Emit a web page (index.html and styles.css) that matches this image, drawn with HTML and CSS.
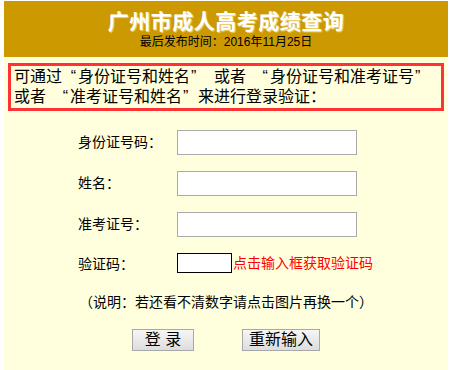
FILE: index.html
```html
<!DOCTYPE html>
<html lang="zh-CN">
<head>
<meta charset="utf-8">
<title>广州市成人高考成绩查询</title>
<link rel="stylesheet" href="styles.css">
</head>
<body>
<div class="page">
  <div class="head">
    <h1 class="title">广州市成人高考成绩查询</h1>
    <p class="date">最后发布时间：2016年11月25日</p>
  </div>
  <div class="main">
    <div class="notice">
      <div class="line">可通过<span class="q q-open">“</span>身份证号和姓名<span class="q q-close">”</span> 或者 <span class="q q-open">“</span>身份证号和准考证号<span class="q q-close">”</span></div>
      <div class="line">或者 <span class="q q-open">“</span>准考证号和姓名<span class="q q-close">”</span>来进行登录验证：</div>
    </div>
    <div class="form">
      <label class="lbl">身份证号码：</label>
      <div class="cell"><input class="field" type="text"></div>
      <label class="lbl">姓名：</label>
      <div class="cell"><input class="field" type="text"></div>
      <label class="lbl">准考证号：</label>
      <div class="cell"><input class="field" type="text"></div>
      <label class="lbl lbl-code">验证码：</label>
      <div class="cell cell-code"><input class="code" type="text"><span class="hint">点击输入框获取验证码</span></div>
    </div>
    <p class="note">（说明：若还看不清数字请点击图片再换一个）</p>
    <div class="actions">
      <button class="btn btn-login" type="button">登 录</button>
      <button class="btn btn-reset" type="button">重新输入</button>
    </div>
  </div>
</div>
</body>
</html>
```

FILE: styles.css
```css
html, body {
  margin: 0;
  padding: 0;
  background: #ffffff;
}

body {
  font-family: "Liberation Sans", "Noto Sans CJK SC", sans-serif;
  color: #000;
}

.page {
  width: 444px;
  margin: 1px 0 0 4px;
}

.head {
  height: 56px;
  box-sizing: border-box;
  padding-top: 9px;
  background: #cc9900;
  text-align: center;
}

.title {
  margin: 0;
  font-size: 21px;
  line-height: 24px;
  font-weight: 700;
  letter-spacing: 0.5px;
  color: #ffffff;
  text-shadow: 1px 1px 1px rgba(255, 240, 170, 0.7);
}

.date {
  margin: 0;
  font-size: 12px;
  line-height: 16px;
  color: #000;
}

.main {
  background: #ffffdd;
  padding: 6px 4px 30px;
}

.notice {
  border: 3px solid #ff3333;
  padding: 1px 3px;
  font-size: 16px;
  line-height: 20px;
  height: 40px;
  white-space: nowrap;
  word-spacing: 3.5px;
}

.line {
  height: 20px;
}

.q {
  display: inline-block;
  width: 16px;
  word-spacing: 0;
}

.q-open {
  text-align: right;
  padding-right: 2px;
  width: 14px;
}

.q-close {
  text-align: left;
  padding-left: 1px;
  width: 15px;
}

.form {
  display: grid;
  grid-template-columns: 99px 197px;
  row-gap: 16px;
  justify-content: center;
  margin-top: 19px;
}

.lbl {
  font-size: 14px;
  line-height: 25px;
  height: 25px;
}

.lbl-code {
  line-height: 22px;
  height: 20px;
}

.cell {
  display: flex;
  align-items: center;
  height: 25px;
}

.cell-code {
  height: 20px;
}

.field {
  box-sizing: border-box;
  width: 180px;
  height: 25px;
  margin: 0;
  border: 1px solid #aaaaaa;
  background: #ffffff;
  padding: 0 3px;
}

.code {
  box-sizing: border-box;
  width: 55px;
  height: 20px;
  margin: 0;
  border: 1px solid #000000;
  background: #ffffff;
  padding: 0 2px;
}

.hint {
  margin-left: 1px;
  font-size: 14px;
  line-height: 20px;
  color: #ff0000;
  white-space: nowrap;
}

.note {
  margin: 19px 0 0;
  font-size: 14px;
  line-height: 20px;
  text-align: center;
}

.actions {
  display: flex;
  justify-content: center;
  gap: 48px;
  margin-top: 17px;
}

.btn {
  box-sizing: border-box;
  height: 22px;
  margin: 0;
  padding: 0;
  border: 1px solid #a8a8a8;
  border-radius: 0;
  background: linear-gradient(#f6f6f6, #dddddd);
  font-family: "Liberation Sans", "Noto Sans CJK SC", sans-serif;
  font-size: 16px;
  line-height: 20px;
  color: #000;
}

.btn-login {
  width: 62px;
}

.btn-reset {
  width: 78px;
}
```
